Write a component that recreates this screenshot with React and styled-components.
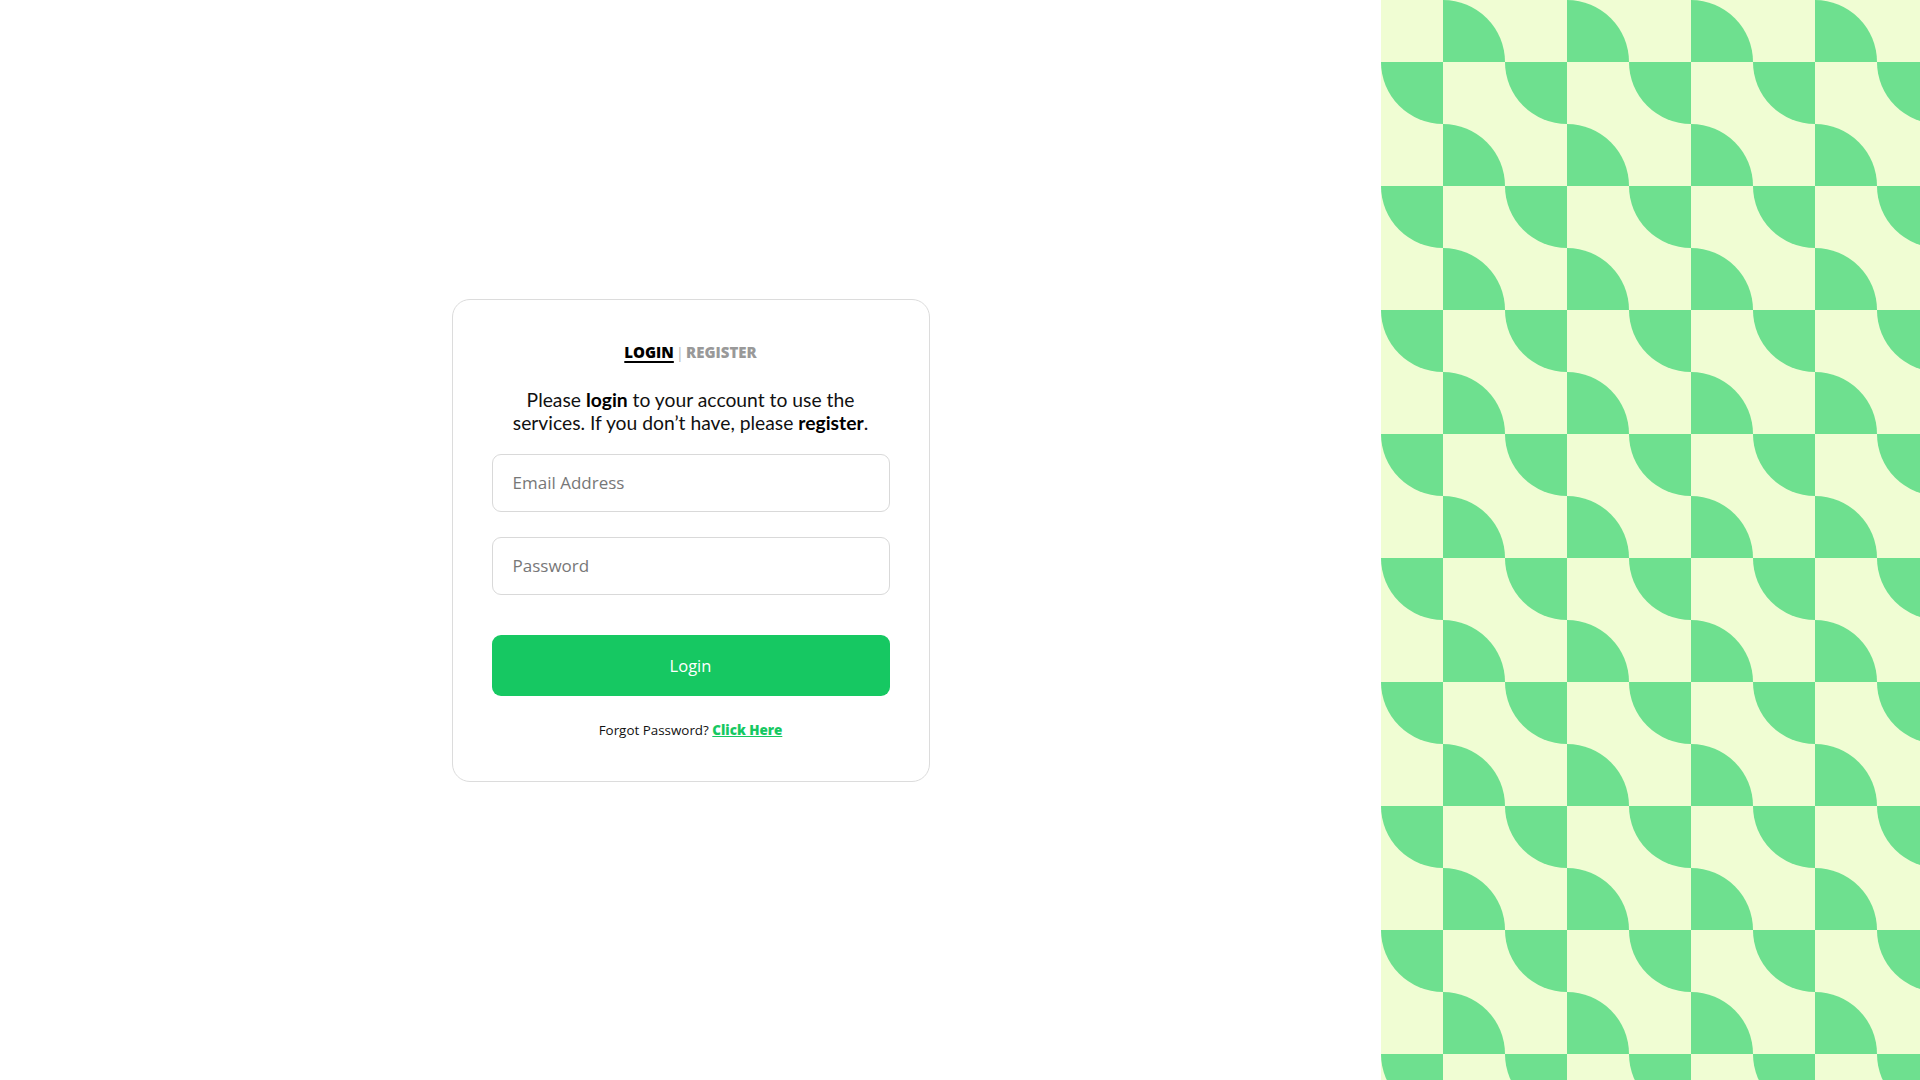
import React from "react";
import styled, { createGlobalStyle } from "styled-components";

const Global = createGlobalStyle`
  html, body { margin: 0; padding: 0; background: #ffffff; }
  body { font-family: "Open Sans", "Noto Sans", sans-serif; }
  * { box-sizing: border-box; }
`;

const Page = styled.div`
  display: flex;
  width: 100%;
  height: 100vh;
  overflow: hidden;
`;

const FormSide = styled.main`
  width: 1381px;
  flex-shrink: 0;
  display: flex;
  align-items: center;
  justify-content: center;
`;

const PatternSide = styled.aside`
  flex: 1;
  height: 100%;
  background: #f0fdd3;
  svg { display: block; width: 100%; height: 100%; }
`;

const Card = styled.section`
  width: 478px;
  height: 483px;
  border: 1px solid #dcdcdc;
  border-radius: 18px;
  padding: 40px 39px 0;
  display: flex;
  flex-direction: column;
  align-items: stretch;
  background: #fff;
`;

const Tabs = styled.div`
  display: flex;
  justify-content: center;
  align-items: center;
  gap: 2px;
  font-family: "Open Sans", sans-serif;
  font-weight: 800;
  font-size: 15px;
  line-height: 24px;
  height: 24px;
`;

const Tab = styled.a`
  color: ${(p) => (p.$active ? "#000" : "#999")};
  text-decoration: ${(p) => (p.$active ? "underline" : "none")};
  text-underline-offset: 3px;
  text-decoration-thickness: 2px;
  cursor: pointer;
`;

const Divider = styled.span`
  color: #bbb;
  font-weight: 400;
`;

const Intro = styled.p`
  margin: 24px auto 0;
  max-width: 385px;
  text-align: center;
  font-family: "Lato", sans-serif;
  font-size: 19.3px;
  line-height: 23px;
  color: #111;
  b { font-weight: 700; color: #000; }
`;

const Input = styled.input`
  display: block;
  width: 100%;
  height: 58px;
  margin-top: ${(p) => p.$mt}px;
  border: 1px solid #d9d9d9;
  border-radius: 9px;
  padding: 0 20px;
  font-family: "Open Sans", sans-serif;
  font-size: 17px;
  color: #222;
  outline: none;
  &::placeholder { color: #777; }
`;

const Button = styled.button`
  margin-top: 40px;
  width: 100%;
  height: 61px;
  border: none;
  border-radius: 9px;
  background: #16c862;
  color: #fff;
  font-family: "Open Sans", sans-serif;
  font-weight: 500;
  font-size: 16.5px;
  cursor: pointer;
`;

const Forgot = styled.p`
  margin: 26px 0 0;
  text-align: center;
  font-family: "Open Sans", sans-serif;
  font-size: 13.4px;
  line-height: 16px;
  color: #111;
  a {
    color: #16c862;
    font-weight: 800;
    text-decoration: underline;
    cursor: pointer;
  }
`;

function Pattern() {
  return (
    <svg aria-hidden="true">
      <defs>
        <pattern id="quarters" x="0" y="0" width="124" height="124" patternUnits="userSpaceOnUse">
          <rect width="124" height="124" fill="#f0fdd3" />
          <path d="M62 62 L62 0 A62 62 0 0 1 124 62 Z" fill="#6ee08f" />
          <path d="M62 62 L62 124 A62 62 0 0 1 0 62 Z" fill="#6ee08f" />
        </pattern>
      </defs>
      <rect width="100%" height="100%" fill="url(#quarters)" />
    </svg>
  );
}

export default function App() {
  return (
    <>
      <Global />
      <Page>
        <FormSide>
          <Card>
            <Tabs>
              <Tab $active>LOGIN</Tab>
              <Divider>|</Divider>
              <Tab>REGISTER</Tab>
            </Tabs>
            <Intro>
              Please <b>login</b> to your account to use the services. If you don’t have, please <b>register</b>.
            </Intro>
            <Input $mt={20} type="email" placeholder="Email Address" />
            <Input $mt={25} type="password" placeholder="Password" />
            <Button>Login</Button>
            <Forgot>
              Forgot Password? <a>Click Here</a>
            </Forgot>
          </Card>
        </FormSide>
        <PatternSide>
          <Pattern />
        </PatternSide>
      </Page>
    </>
  );
}
